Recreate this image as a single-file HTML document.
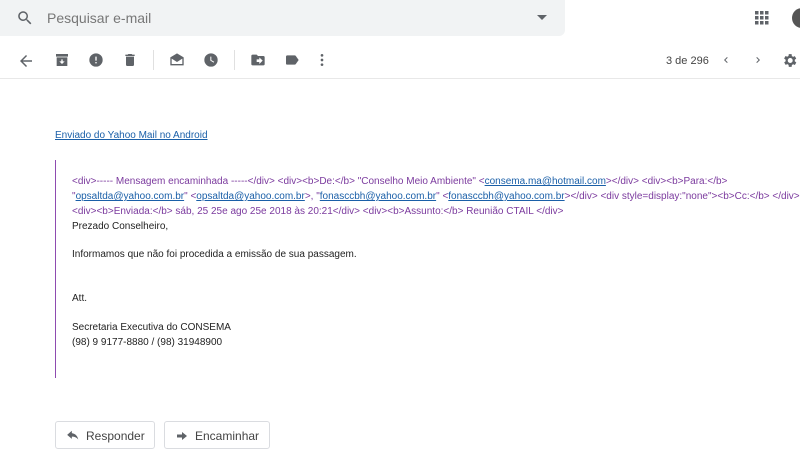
<!DOCTYPE html>
<html><head><meta charset="utf-8"><style>
*{margin:0;padding:0;box-sizing:border-box}
body{width:800px;height:470px;overflow:hidden;background:#fff;font-family:"Liberation Sans",Arial,sans-serif;position:relative;color:#222}
.abs{position:absolute}
.search{left:0;top:0;width:565px;height:36px;background:#f1f3f4;border-radius:0 0 6px 0}
.search span{position:absolute;left:47px;top:10px;font-size:14px;color:#777}
.ic{position:absolute;fill:#5f6368}
.hr{left:0;top:78px;width:800px;height:1px;background:#e8e8e8}
.sep{width:1px;height:20px;background:#e0e0e0;top:50px}
.txt{font-size:10px;line-height:15px}
.p{color:#7b3a9e}
a{color:#1a5fa8;text-decoration:underline}
.btn{top:421px;height:28px;border:1px solid #dadce0;border-radius:3px;font-size:12px;color:#444}
</style></head><body>
<div class="abs search"><svg class="ic" style="left:16px;top:9px" width="18" height="18" viewBox="0 0 24 24"><path d="M15.5 14h-.8l-.3-.3A6.5 6.5 0 1 0 9.5 16a6.5 6.5 0 0 0 4.2-1.6l.3.3v.8l5 5 1.5-1.5-5-5zm-6 0A4.5 4.5 0 1 1 14 9.5 4.5 4.5 0 0 1 9.5 14z"/></svg><span>Pesquisar e-mail</span>
<svg class="ic" style="left:536px;top:13px" width="12" height="10" viewBox="0 0 12 10"><path d="M1 2h10L6 7z"/></svg></div>
<svg class="ic" style="left:755px;top:11px" width="14" height="14" viewBox="0 0 14 14"><g><rect x="0" y="0" width="3.5" height="3.5"/><rect x="5" y="0" width="3.5" height="3.5"/><rect x="10" y="0" width="3.5" height="3.5"/><rect x="0" y="5" width="3.5" height="3.5"/><rect x="5" y="5" width="3.5" height="3.5"/><rect x="10" y="5" width="3.5" height="3.5"/><rect x="0" y="10" width="3.5" height="3.5"/><rect x="5" y="10" width="3.5" height="3.5"/><rect x="10" y="10" width="3.5" height="3.5"/></g></svg>
<div class="abs" style="left:792px;top:8px;width:20px;height:20px;border-radius:50%;background:#555"></div>

<svg class="ic" style="left:17px;top:52px" width="18" height="18" viewBox="0 0 24 24"><path d="M20 11H7.8l5.6-5.6L12 4l-8 8 8 8 1.4-1.4L7.8 13H20z"/></svg>
<svg class="ic" style="left:54px;top:52px" width="16" height="16" viewBox="0 0 24 24"><path d="M3 3h18v4H3zM4 8h16v13H4zm8 10l4-4h-3v-3h-2v3H8z"/></svg>
<svg class="ic" style="left:88px;top:52px" width="16" height="16" viewBox="0 0 24 24"><path d="M12 2a10 10 0 1 0 0 20 10 10 0 0 0 0-20zm1 15h-2v-2h2zm0-4h-2V7h2z"/></svg>
<svg class="ic" style="left:122px;top:52px" width="16" height="16" viewBox="0 0 24 24"><path d="M6 19a2 2 0 0 0 2 2h8a2 2 0 0 0 2-2V7H6zM19 4h-3.5l-1-1h-5l-1 1H5v2h14z"/></svg>
<div class="abs sep" style="left:153px"></div>
<svg class="ic" style="left:169px;top:52px" width="16" height="16" viewBox="0 0 24 24"><path d="M12 2L2 8v12h20V8zm8 16H4V10l8 5 8-5z"/></svg>
<svg class="ic" style="left:203px;top:52px" width="16" height="16" viewBox="0 0 24 24"><path d="M12 2a10 10 0 1 0 0 20 10 10 0 0 0 0-20zm4 14l-5-3V7h1.5v5.2l4.3 2.5z"/></svg>
<div class="abs sep" style="left:234px"></div>
<svg class="ic" style="left:250px;top:52px" width="16" height="16" viewBox="0 0 24 24"><path d="M20 6h-8l-2-2H4a2 2 0 0 0-2 2v12a2 2 0 0 0 2 2h16a2 2 0 0 0 2-2V8a2 2 0 0 0-2-2zm-6 12v-3h-4v-4h4V8l5 5z"/></svg>
<svg class="ic" style="left:284px;top:52px" width="16" height="16" viewBox="0 0 24 24"><path d="M17.6 5.8A2 2 0 0 0 16 5H5a2 2 0 0 0-2 2v10a2 2 0 0 0 2 2h11a2 2 0 0 0 1.6-.8L22 12z"/></svg>
<svg class="ic" style="left:314px;top:52px" width="16" height="16" viewBox="0 0 24 24"><circle cx="12" cy="5" r="2"/><circle cx="12" cy="12" r="2"/><circle cx="12" cy="19" r="2"/></svg>
<div class="abs" style="left:666px;top:55px;font-size:11px;color:#444">3 de 296</div>
<svg class="ic" style="left:720px;top:54px" width="12" height="12" viewBox="0 0 24 24"><path d="M15.4 7.4L14 6l-6 6 6 6 1.4-1.4L10.8 12z"/></svg>
<svg class="ic" style="left:752px;top:54px" width="12" height="12" viewBox="0 0 24 24"><path d="M10 6L8.6 7.4 13.2 12l-4.6 4.6L10 18l6-6z"/></svg>
<svg class="ic" style="left:781px;top:52px" width="17" height="17" viewBox="0 0 24 24"><path d="M19.4 13a7.5 7.5 0 0 0 0-2l2.1-1.6-2-3.5-2.5 1a7 7 0 0 0-1.7-1L15 3h-4l-.4 2.7a7 7 0 0 0-1.7 1l-2.5-1-2 3.5L6.6 11a7.5 7.5 0 0 0 0 2l-2.1 1.6 2 3.5 2.5-1a7 7 0 0 0 1.7 1L11 21h4l.4-2.7a7 7 0 0 0 1.7-1l2.5 1 2-3.5zM13 15.5a3.5 3.5 0 1 1 0-7 3.5 3.5 0 0 1 0 7z"/></svg>
<div class="abs hr"></div>

<div class="abs txt" style="left:55px;top:128px"><a>Enviado do Yahoo Mail no Android</a></div>
<div class="abs" style="left:55px;top:160px;width:1px;height:218px;background:#8e4bb0"></div>
<div class="abs txt" style="left:72px;top:174px;width:728px;white-space:nowrap;overflow:hidden">
<div class="p">&lt;div&gt;----- Mensagem encaminhada -----&lt;/div&gt; &lt;div&gt;&lt;b&gt;De:&lt;/b&gt; "Conselho Meio Ambiente" &lt;<a>consema.ma@hotmail.com</a>&gt;&lt;/div&gt; &lt;div&gt;&lt;b&gt;Para:&lt;/b&gt;</div>
<div class="p">"<a>opsaltda@yahoo.com.br</a>" &lt;<a>opsaltda@yahoo.com.br</a>&gt;, "<a>fonasccbh@yahoo.com.br</a>" &lt;<a>fonasccbh@yahoo.com.br</a>&gt;&lt;/div&gt; &lt;div style=display:"none"&gt;&lt;b&gt;Cc:&lt;/b&gt; &lt;/div&gt;</div>
<div class="p">&lt;div&gt;&lt;b&gt;Enviada:&lt;/b&gt; sáb, 25 25e ago 25e 2018 às 20:21&lt;/div&gt; &lt;div&gt;&lt;b&gt;Assunto:&lt;/b&gt; Reunião CTAIL &lt;/div&gt;</div>
<div>Prezado Conselheiro,</div>
<div style="margin-top:13px">Informamos que não foi procedida a emissão de sua passagem.</div>
<div style="margin-top:29px">Att.</div>
<div style="margin-top:14px">Secretaria Executiva do CONSEMA</div>
<div>(98) 9 9177-8880 / (98) 31948900</div>
</div>

<div class="abs btn" style="left:55px;width:100px"><svg class="ic" style="left:10px;top:8px" width="14" height="12" viewBox="0 0 24 20"><path d="M10 5V1L2 8l8 7v-4c5 0 8.5 1.6 11 5-1-5-4-10-11-11z"/></svg><span class="abs" style="left:30px;top:7px">Responder</span></div>
<div class="abs btn" style="left:164px;width:106px"><svg class="ic" style="left:11px;top:8px" width="12" height="12" viewBox="0 0 24 24"><path d="M12 4v5H2v6h10v5l10-8z"/></svg><span class="abs" style="left:30px;top:7px">Encaminhar</span></div>
</body></html>
